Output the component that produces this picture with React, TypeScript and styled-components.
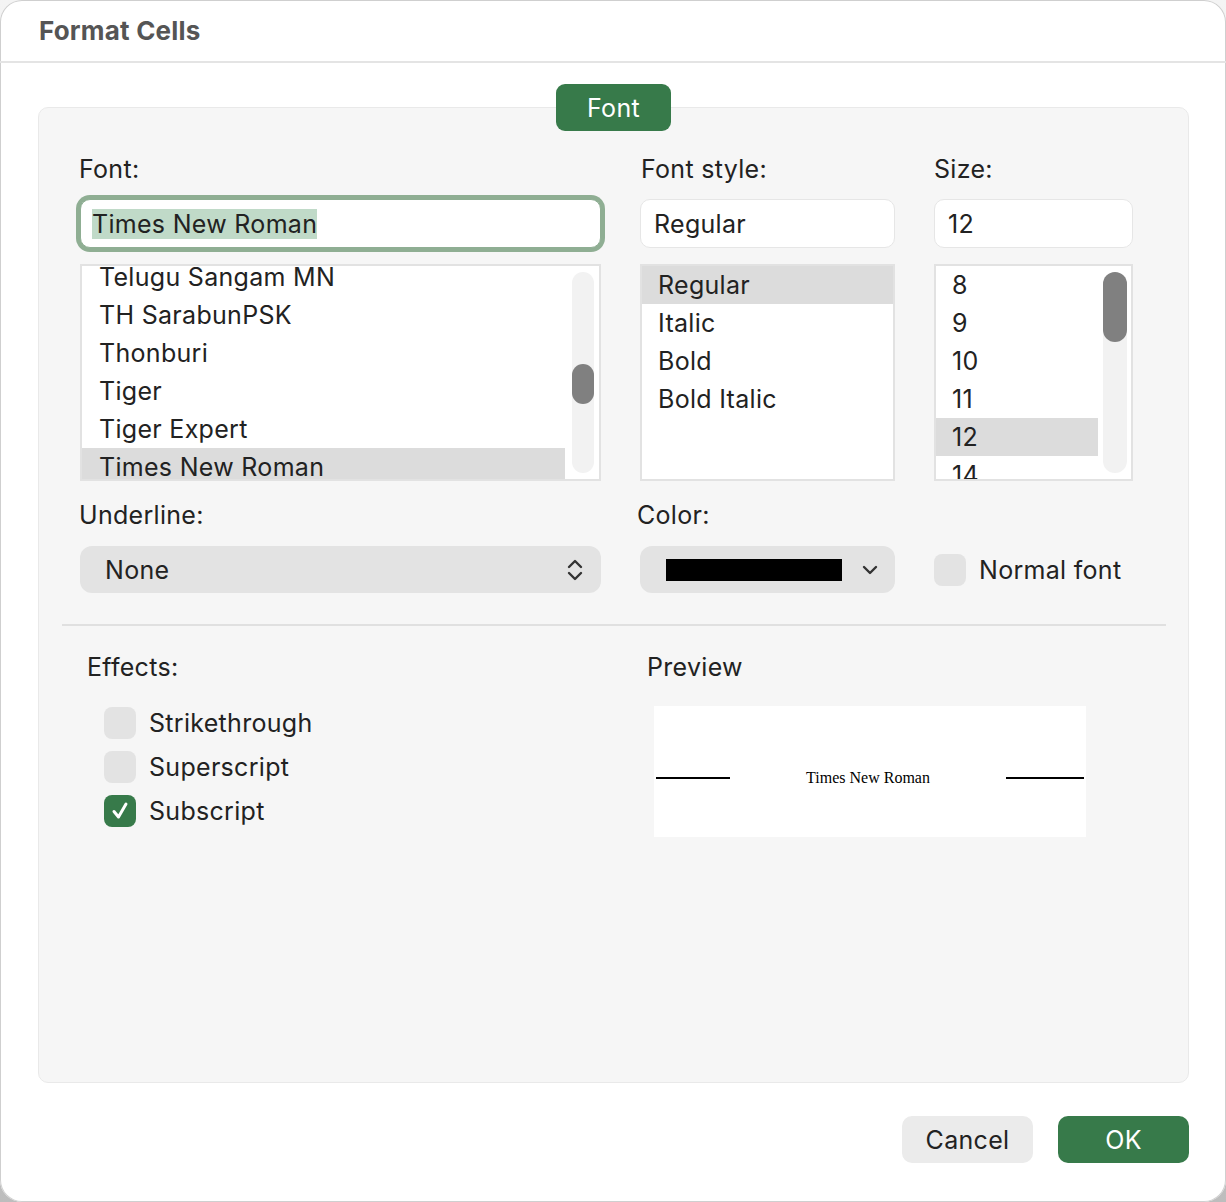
import React from 'react';
import styled, { createGlobalStyle } from 'styled-components';

const Global = createGlobalStyle`
  html, body { margin: 0; padding: 0; }
  body {
    background: linear-gradient(#f4f4f4, #bdbdbd);
    font-family: Inter, "Liberation Sans", sans-serif;
    color: #222;
    letter-spacing: 0.3px;
  }
`;

const Window = styled.div`
  width: 1226px;
  height: 1202px;
  box-sizing: border-box;
  background: #fff;
  border-radius: 22px;
  box-shadow: inset 0 0 0 1px #cfcfcf;
  display: flex;
  flex-direction: column;
  overflow: hidden;
`;

const Header = styled.div`
  height: 61px;
  flex: none;
  display: flex;
  align-items: center;
  padding-left: 39px;
  border-bottom: 2px solid #e4e4e4;
  font-size: 26px;
  font-weight: 700;
  letter-spacing: 0.2px;
  color: #555;
`;

const Body = styled.div`
  padding: 44px 37px 0 38px;
`;

const Panel = styled.div`
  height: 976px;
  box-sizing: border-box;
  background: #f6f6f6;
  border: 1px solid #e9e9e9;
  border-radius: 10px;
  padding: 0 55px 0 41px;
  display: flex;
  flex-direction: column;
`;

const Tab = styled.div`
  align-self: center;
  margin: -24px 0 0 14px;
  width: 115px;
  height: 47px;
  border-radius: 9px;
  background: #377a4a;
  color: #fff;
  font-size: 25px;
  display: flex;
  align-items: center;
  justify-content: center;
`;

const TopGrid = styled.div`
  margin-top: 24px;
  display: grid;
  grid-template-columns: 521px 255px 199px;
  column-gap: 39px;
`;

const Label = styled.div<{ $top?: number; $dx?: number }>`
  font-size: 25px;
  line-height: 29px;
  color: #222;
  margin-top: ${p => p.$top ?? 0}px;
  margin-left: ${p => p.$dx ?? 0}px;
`;

const Input = styled.div<{ $focus?: boolean }>`
  margin-top: 15px;
  height: 49px;
  box-sizing: border-box;
  background: #fff;
  border-radius: 10px;
  border: 1px solid ${p => (p.$focus ? '#8fae93' : '#e6e6e6')};
  box-shadow: ${p => (p.$focus ? '0 0 0 4px #8fae93' : 'none')};
  display: flex;
  align-items: center;
  padding-left: ${p => (p.$focus ? 11 : 13)}px;
  font-size: 25px;
`;

const Selection = styled.span`
  background: #c0dac8;
  line-height: 30px;
`;

const List = styled.div`
  margin-top: 16px;
  height: 217px;
  box-sizing: border-box;
  border: 2px solid #e2e2e2;
  background: #fff;
  overflow: hidden;
  display: flex;
`;

const Rows = styled.div<{ $shift?: number }>`
  flex: 1;
  margin-top: ${p => p.$shift ?? 0}px;
`;

const Row = styled.div<{ $selected?: boolean; $pad?: number }>`
  height: 38px;
  line-height: 38px;
  padding-left: ${p => p.$pad ?? 16}px;
  font-size: 25px;
  color: #222;
  white-space: nowrap;
  background: ${p => (p.$selected ? '#dcdcdc' : 'transparent')};
`;

const Track = styled.div<{ $w: number; $ml: number; $mr: number }>`
  flex: none;
  width: ${p => p.$w}px;
  margin: 6px ${p => p.$mr}px 6px ${p => p.$ml}px;
  background: #f2f2f2;
  border-radius: 12px;
  display: flex;
  flex-direction: column;
`;

const Thumb = styled.div<{ $top: number; $h: number }>`
  margin-top: ${p => p.$top}px;
  height: ${p => p.$h}px;
  background: #808080;
  border-radius: 12px;
`;

const Select = styled.div<{ $pl: number; $pr: number }>`
  margin-top: 16px;
  height: 47px;
  box-sizing: border-box;
  background: #e3e3e3;
  border-radius: 12px;
  display: flex;
  align-items: center;
  justify-content: space-between;
  padding: 0 ${p => p.$pr}px 0 ${p => p.$pl}px;
  font-size: 25px;
`;

const Swatch = styled.div`
  width: 176px;
  height: 22px;
  background: #000;
`;

const CheckRow = styled.div<{ $top?: number }>`
  display: flex;
  align-items: center;
  gap: 13px;
  font-size: 25px;
  margin-top: ${p => p.$top ?? 0}px;
`;

const Box = styled.div<{ $checked?: boolean }>`
  width: 32px;
  height: 32px;
  border-radius: 8px;
  background: ${p => (p.$checked ? '#377a4a' : '#e3e3e3')};
  display: flex;
  align-items: center;
  justify-content: center;
`;

const Separator = styled.div`
  margin: 31px -33px 0 -18px;
  height: 2px;
  background: #e0e0e0;
`;

const BottomGrid = styled.div`
  margin-top: 27px;
  padding-left: 7px;
  display: grid;
  grid-template-columns: 560px 1fr;
`;

const Column = styled.div`
  display: flex;
  flex-direction: column;
`;

const Effects = styled.div`
  margin-top: 25px;
  padding-left: 17px;
  display: flex;
  flex-direction: column;
  gap: 12px;
`;

const PreviewBox = styled.div`
  margin: 24px 0 0 7px;
  width: 432px;
  height: 131px;
  box-sizing: border-box;
  padding-top: 12px;
  background: #fff;
  display: flex;
  align-items: center;
`;

const PreviewLine = styled.div<{ $w: number; $ml: number; $mr: number }>`
  width: ${p => p.$w}px;
  height: 2px;
  background: #000;
  margin-left: ${p => p.$ml}px;
  margin-right: ${p => p.$mr}px;
  flex: none;
`;

const PreviewText = styled.div`
  flex: 1;
  text-align: center;
  font-family: "Liberation Serif", "Times New Roman", serif;
  font-size: 16px;
  letter-spacing: 0;
  color: #000;
`;

const Footer = styled.div`
  display: flex;
  justify-content: flex-end;
  gap: 25px;
  padding: 33px 37px 0 0;
`;

const Button = styled.div<{ $primary?: boolean }>`
  width: 131px;
  height: 47px;
  border-radius: 10px;
  background: ${p => (p.$primary ? '#377a4a' : '#ebebeb')};
  color: ${p => (p.$primary ? '#fff' : '#222')};
  font-size: 25px;
  display: flex;
  align-items: center;
  justify-content: center;
`;

const UpDown = () => (
  <svg width="16" height="24" viewBox="0 0 16 24" fill="none" stroke="#333" strokeWidth="2.4" strokeLinecap="round" strokeLinejoin="round">
    <path d="M2 9 L8 3 L14 9" />
    <path d="M2 15 L8 21 L14 15" />
  </svg>
);

const Down = () => (
  <svg width="16" height="10" viewBox="0 0 16 10" fill="none" stroke="#333" strokeWidth="2.4" strokeLinecap="round" strokeLinejoin="round">
    <path d="M2 2 L8 8 L14 2" />
  </svg>
);

const Check = () => (
  <svg width="22" height="22" viewBox="0 0 22 22" fill="none" stroke="#fff" strokeWidth="3" strokeLinecap="round" strokeLinejoin="round">
    <path d="M5 11.5 L9.5 17 L17 4" />
  </svg>
);

const fonts = ['Telugu Sangam MN', 'TH SarabunPSK', 'Thonburi', 'Tiger', 'Tiger Expert', 'Times New Roman'];
const styles = ['Regular', 'Italic', 'Bold', 'Bold Italic'];
const sizes = ['8', '9', '10', '11', '12', '14'];

export default function App() {
  return (
    <>
      <Global />
      <Window>
        <Header>Format Cells</Header>
        <Body>
          <Panel>
            <Tab>Font</Tab>
            <TopGrid>
              <Label $dx={-1}>Font:</Label>
              <Label $dx={1}>Font style:</Label>
              <Label>Size:</Label>

              <Input $focus>
                <Selection>Times New Roman</Selection>
              </Input>
              <Input>Regular</Input>
              <Input>12</Input>

              <List>
                <Rows $shift={-8}>
                  {fonts.map(f => (
                    <Row key={f} $pad={17} $selected={f === 'Times New Roman'}>{f}</Row>
                  ))}
                </Rows>
                <Track $w={22} $ml={7} $mr={5}>
                  <Thumb $top={92} $h={40} />
                </Track>
              </List>
              <List>
                <Rows>
                  {styles.map(s => (
                    <Row key={s} $selected={s === 'Regular'}>{s}</Row>
                  ))}
                </Rows>
              </List>
              <List>
                <Rows>
                  {sizes.map(s => (
                    <Row key={s} $selected={s === '12'}>{s}</Row>
                  ))}
                </Rows>
                <Track $w={24} $ml={5} $mr={4}>
                  <Thumb $top={0} $h={70} />
                </Track>
              </List>

              <Label $top={20} $dx={-1}>Underline:</Label>
              <Label $top={20} $dx={-3}>Color:</Label>
              <div />

              <Select $pl={25} $pr={18}>
                <span>None</span>
                <UpDown />
              </Select>
              <Select $pl={26} $pr={17}>
                <Swatch />
                <Down />
              </Select>
              <CheckRow $top={16}>
                <Box />
                <span>Normal font</span>
              </CheckRow>
            </TopGrid>

            <Separator />

            <BottomGrid>
              <Column>
                <Label>Effects:</Label>
                <Effects>
                  <CheckRow><Box /><span>Strikethrough</span></CheckRow>
                  <CheckRow><Box /><span>Superscript</span></CheckRow>
                  <CheckRow><Box $checked><Check /></Box><span>Subscript</span></CheckRow>
                </Effects>
              </Column>
              <Column>
                <Label>Preview</Label>
                <PreviewBox>
                  <PreviewLine $w={74} $ml={2} $mr={0} />
                  <PreviewText>Times New Roman</PreviewText>
                  <PreviewLine $w={78} $ml={0} $mr={2} />
                </PreviewBox>
              </Column>
            </BottomGrid>
          </Panel>
        </Body>
        <Footer>
          <Button>Cancel</Button>
          <Button $primary>OK</Button>
        </Footer>
      </Window>
    </>
  );
}
